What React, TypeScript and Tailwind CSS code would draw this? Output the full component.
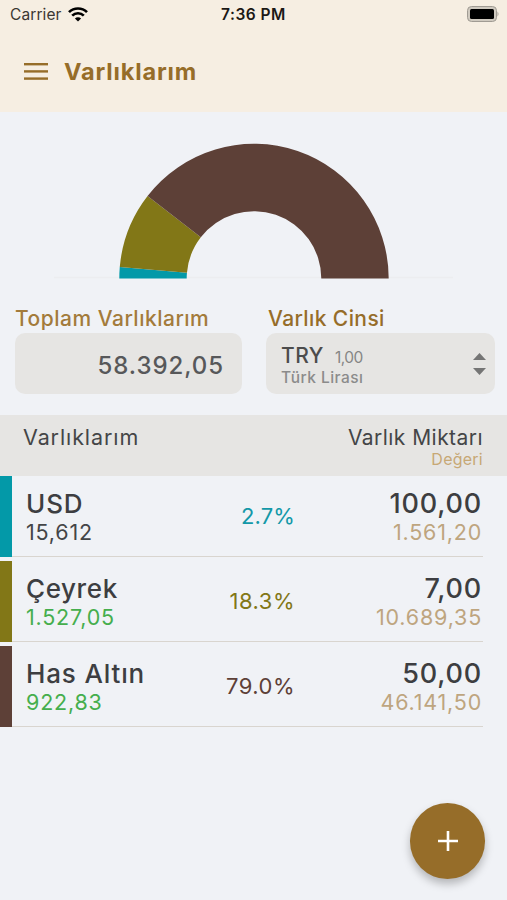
import React from 'react';

type Asset = {
  name: string;
  rate: string;
  percent: string;
  amount: string;
  value: string;
  share: number;
  fill: string;
  bar: string;
  text: string;
  rateText: string;
  nameSpacing: string;
};

const ASSETS: Asset[] = [
  { name: 'USD', rate: '15,612', percent: '2.7%', amount: '100,00', value: '1.561,20', share: 2.7, fill: '#0399a8', bar: 'bg-[#0399a8]', text: 'text-[#1398a8] tracking-[0.1px]', rateText: 'text-[#444547]', nameSpacing: 'tracking-[0.9px]' },
  { name: 'Çeyrek', rate: '1.527,05', percent: '18.3%', amount: '7,00', value: '10.689,35', share: 18.3, fill: '#827717', bar: 'bg-[#827717]', text: 'text-[#827717] tracking-[0.5px]', rateText: 'text-[#45ae4d]', nameSpacing: 'tracking-[0.6px]' },
  { name: 'Has Altın', rate: '922,83', percent: '79.0%', amount: '50,00', value: '46.141,50', share: 79, fill: '#5d4037', bar: 'bg-[#5d4037]', text: 'text-[#5d4037] tracking-[0.5px]', rateText: 'text-[#45ae4d]', nameSpacing: 'tracking-[0.85px]' },
];

const CX = 254;
const CY = 166.5;
const OUTER = 134.7;
const INNER = 67.3;

const point = (r: number, share: number) => {
  const a = (share / 100) * Math.PI;
  return `${CX - r * Math.cos(a)} ${CY - r * Math.sin(a)}`;
};

const slicePath = (from: number, to: number) =>
  `M${point(OUTER, from)} A${OUTER} ${OUTER} 0 0 1 ${point(OUTER, to)} L${point(INNER, to)} A${INNER} ${INNER} 0 0 0 ${point(INNER, from)} Z`;

const HalfDonut = () => {
  let start = 0;
  return (
    <svg width="507" height="190" viewBox="0 0 507 190" className="block">
      <path d="M54 165.5H453" stroke="#ecedf0" strokeWidth="1.5" />
      {ASSETS.map(a => {
        const from = start;
        start += a.share;
        return <path key={a.name} d={slicePath(from, start)} fill={a.fill} />;
      })}
    </svg>
  );
};

const StatusBar = () => (
  <div className="grid grid-cols-3 items-center h-[30px] pl-2.5 pr-2 text-[15.5px] text-[#1b1815]">
    <div className="flex items-center gap-[7px]">
      <span className="text-[#3b3733] tracking-[0.1px]">Carrier</span>
      <svg width="20" height="15" viewBox="0 0 20 15" fill="none" stroke="#000" strokeWidth="2.7" className="-ml-px -mt-px">
        <path d="M1 5.1a13 13 0 0 1 18 0" />
        <path d="M4.2 8.6a8.3 8.3 0 0 1 11.6 0" />
        <path d="M10 14.6L6.9 11.5a4.4 4.4 0 0 1 6.2 0Z" fill="#000" stroke="none" />
      </svg>
    </div>
    <span className="text-center font-semibold tracking-[0.5px] -ml-0.5">7:36 PM</span>
    <svg width="33" height="16" viewBox="0 0 33 16" className="justify-self-end -mt-[2px]">
      <rect x="1.5" y="0.5" width="29" height="15" rx="4" fill="#cfc9bf" stroke="#a09b93" />
      <rect x="4" y="3" width="24" height="10" rx="1.5" fill="#000" />
      <path d="M31.5 5.5q2 2.5 0 5Z" fill="#a09b93" />
    </svg>
  </div>
);

const AssetRow = ({ asset }: { asset: Asset }) => (
  <div className="flex h-[81px]">
    <div className={`w-3 ${asset.bar}`} />
    <div className="flex flex-1 mr-6 pl-3.5 border-b border-[#d9d5cf]">
      <div className="w-[170px] pt-3">
        <div className={`h-[31px] leading-8 text-[26px] font-medium text-[#3d3e41] ${asset.nameSpacing}`}>{asset.name}</div>
        <div className={`h-[26px] leading-[26px] text-[21.5px] tracking-[0.8px] ${asset.rateText}`}>{asset.rate}</div>
      </div>
      <div className={`w-[99px] pt-[27px] h-[53px] leading-[26px] text-right text-[22px] ${asset.text}`}>{asset.percent}</div>
      <div className="flex-1 pt-3 pr-px text-right">
        <div className="h-[31px] leading-8 text-[27px] font-medium text-[#3d3e41] tracking-[0.8px]">{asset.amount}</div>
        <div className="h-[26px] leading-[26px] text-[21.5px] tracking-[0.8px] text-[#bea57f]">{asset.value}</div>
      </div>
    </div>
  </div>
);

export default function App() {
  return (
    <div className="relative w-[507px] h-[900px] overflow-hidden bg-[#f0f2f6] font-['Inter','Liberation_Sans',sans-serif]">
      <header className="h-28 bg-[#f6eee2]">
        <StatusBar />
        <div className="flex items-center h-[84px] pl-6 gap-4">
          <svg width="24" height="17" viewBox="0 0 24 17" fill="#966d29" className="-mt-[2px]">
            <rect width="24" height="2.4" />
            <rect y="7.2" width="24" height="2.4" />
            <rect y="14.4" width="24" height="2.4" />
          </svg>
          <h1 className="text-[23.5px] font-bold text-[#966d29] tracking-[0.85px]">Varlıklarım</h1>
        </div>
      </header>

      <HalfDonut />

      {/* Total and currency */}
      <div className="flex pl-[15px] pr-3 gap-6 pt-[5px]">
        <div className="w-[227px]">
          <div className="h-[26px] leading-6 text-[21px] font-medium text-[#a37b3b] tracking-[0.5px]">Toplam Varlıklarım</div>
          <div className="flex items-center justify-end h-[61px] pr-[18px] pt-1 rounded-[10px] bg-[#e6e5e3] text-[24px] font-medium text-[#57585a] tracking-[0.95px]">58.392,05</div>
        </div>
        <div className="flex-1">
          <div className="h-[26px] pl-0.5 leading-6 text-[21px] font-medium text-[#966d29] tracking-[0.4px]">Varlık Cinsi</div>
          <div className="flex items-center justify-between h-[61px] pl-[15px] pr-[9px] rounded-[10px] bg-[#e6e5e3]">
            <div className="pt-[5px]">
              <div className="flex items-baseline gap-[11px] h-6 leading-6">
                <span className="text-[21px] font-medium text-[#4c4c4c] tracking-[0.5px]">TRY</span>
                <span className="text-[15.5px] tracking-[-0.5px] text-[#858585]">1,00</span>
              </div>
              <div className="h-5 leading-5 text-[15.5px] font-medium text-[#8b8b8b] tracking-[0.45px]">Türk Lirası</div>
            </div>
            <svg width="13" height="22" viewBox="0 0 13 22" fill="#757575">
              <path d="M0 7L6.5 0L13 7Z" />
              <path d="M0 15L6.5 22L13 15Z" />
            </svg>
          </div>
        </div>
      </div>

      {/* List header */}
      <div className="flex justify-between h-[61px] mt-[21px] pl-[23px] pr-6 pt-[9px] bg-[#e6e5e3] text-[#444547]">
        <div className="leading-[26px] text-[21.5px] tracking-[0.9px]">Varlıklarım</div>
        <div className="text-right">
          <div className="h-[25px] leading-[27px] text-[21px] tracking-[0.45px]">Varlık Miktarı</div>
          <div className="h-5 leading-5 text-[16px] tracking-[0.25px] text-[#c7a875]">Değeri</div>
        </div>
      </div>

      <div className="flex flex-col gap-1">
        {ASSETS.map(a => <AssetRow key={a.name} asset={a} />)}
      </div>

      <button className="absolute left-[410px] top-[803px] flex items-center justify-center w-[75px] h-[76px] rounded-full bg-[#966d29] shadow-[0_5px_8px_rgba(0,0,0,0.25)]">
        <svg width="20" height="20" viewBox="0 0 20 20" stroke="#fff" strokeWidth="2.6">
          <path d="M0 10H20M10 0V20" />
        </svg>
      </button>
    </div>
  );
}
